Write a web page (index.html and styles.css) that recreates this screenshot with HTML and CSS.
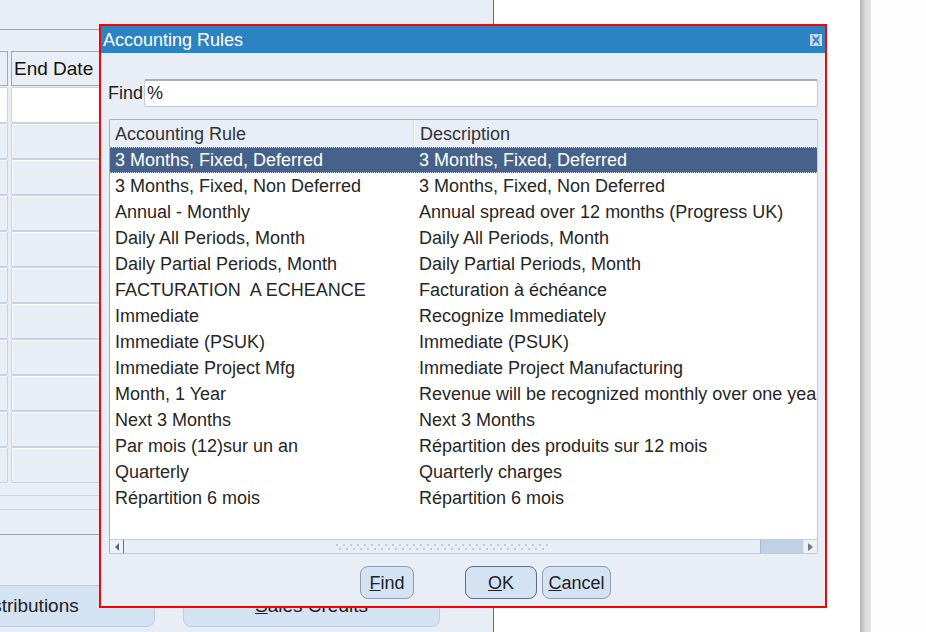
FILE: index.html
```html
<!DOCTYPE html>
<html>
<head>
<meta charset="utf-8">
<title>Accounting Rules</title>
<link rel="stylesheet" href="styles.css">
</head>
<body>
<div class="screen">
  <div class="form-panel">
    <div class="toolbar"></div>
    <div class="grid">
      <div class="grow head"><div class="cell c1"></div><div class="cell c2">End Date</div></div>
      <div class="grow"><div class="cell c1 white"></div><div class="cell c2 white"></div></div>
      <div class="grow"><div class="cell c1"></div><div class="cell c2"></div></div>
      <div class="grow"><div class="cell c1"></div><div class="cell c2"></div></div>
      <div class="grow"><div class="cell c1"></div><div class="cell c2"></div></div>
      <div class="grow"><div class="cell c1"></div><div class="cell c2"></div></div>
      <div class="grow"><div class="cell c1"></div><div class="cell c2"></div></div>
      <div class="grow"><div class="cell c1"></div><div class="cell c2"></div></div>
      <div class="grow"><div class="cell c1"></div><div class="cell c2"></div></div>
      <div class="grow"><div class="cell c1"></div><div class="cell c2"></div></div>
      <div class="grow"><div class="cell c1"></div><div class="cell c2"></div></div>
      <div class="grow"><div class="cell c1"></div><div class="cell c2"></div></div>
    </div>
    <div class="sep-lines"></div>
    <div class="sep-gray"></div>
    <div class="tabs">
      <div class="tab tab-dist">Distributions</div>
      <div class="tab tab-sales"><u>S</u>ales Credits</div>
    </div>
  </div>
  <div class="canvas"></div>
  <div class="vbar"></div>
  <div class="rest"></div>
</div>

<div class="dialog">
  <div class="titlebar">
    <span class="title">Accounting Rules</span>
    <span class="close">
      <svg width="12" height="12" viewBox="0 0 12 12">
        <rect width="12" height="12" fill="#c6dbf0"/>
        <path d="M3 3L9 9M9 3L3 9" stroke="#3482c6" stroke-width="2"/>
        <path d="M2 2h2M8 2h2M2 10h2M8 10h2" stroke="#3482c6" stroke-width="1"/>
      </svg>
    </span>
  </div>
  <div class="dlg-body">
    <div class="find-row">
      <span class="find-label">Find</span>
      <div class="find-input">%</div>
    </div>
    <div class="list">
      <div class="list-head">
        <div class="col-rule">Accounting Rule</div>
        <div class="col-desc">Description</div>
      </div>
      <div class="list-rows">
        <div class="lrow selected"><div class="col-rule">3 Months, Fixed, Deferred</div><div class="col-desc">3 Months, Fixed, Deferred</div></div>
        <div class="lrow"><div class="col-rule">3 Months, Fixed, Non Deferred</div><div class="col-desc">3 Months, Fixed, Non Deferred</div></div>
        <div class="lrow"><div class="col-rule">Annual - Monthly</div><div class="col-desc">Annual spread over 12 months (Progress UK)</div></div>
        <div class="lrow"><div class="col-rule">Daily All Periods, Month</div><div class="col-desc">Daily All Periods, Month</div></div>
        <div class="lrow"><div class="col-rule">Daily Partial Periods, Month</div><div class="col-desc">Daily Partial Periods, Month</div></div>
        <div class="lrow"><div class="col-rule">FACTURATION  A ECHEANCE</div><div class="col-desc">Facturation à échéance</div></div>
        <div class="lrow"><div class="col-rule">Immediate</div><div class="col-desc">Recognize Immediately</div></div>
        <div class="lrow"><div class="col-rule">Immediate (PSUK)</div><div class="col-desc">Immediate (PSUK)</div></div>
        <div class="lrow"><div class="col-rule">Immediate Project Mfg</div><div class="col-desc">Immediate Project Manufacturing</div></div>
        <div class="lrow"><div class="col-rule">Month, 1 Year</div><div class="col-desc">Revenue will be recognized monthly over one year</div></div>
        <div class="lrow"><div class="col-rule">Next 3 Months</div><div class="col-desc">Next 3 Months</div></div>
        <div class="lrow"><div class="col-rule">Par mois (12)sur un an</div><div class="col-desc">Répartition des produits sur 12 mois</div></div>
        <div class="lrow"><div class="col-rule">Quarterly</div><div class="col-desc">Quarterly charges</div></div>
        <div class="lrow"><div class="col-rule">Répartition 6 mois</div><div class="col-desc">Répartition 6 mois</div></div>
      </div>
      <div class="hscroll">
        <div class="sb-btn sb-left"><span class="tri-left"></span></div>
        <div class="sb-track"><div class="grip"></div></div>
        <div class="sb-thumb"></div>
        <div class="sb-btn sb-right"><span class="tri-right"></span></div>
      </div>
    </div>
    <div class="buttons">
      <div class="btn btn-find"><u>F</u>ind</div>
      <div class="btn btn-ok"><u>O</u>K</div>
      <div class="btn btn-cancel"><u>C</u>ancel</div>
    </div>
  </div>
</div>
</body>
</html>
```

FILE: styles.css
```css
* { box-sizing: border-box; }
html, body {
  margin: 0;
  padding: 0;
  width: 926px;
  height: 632px;
  overflow: hidden;
  font-family: "Liberation Sans", Arial, sans-serif;
  background: #ffffff;
}
.screen {
  display: flex;
  width: 926px;
  height: 632px;
}
.form-panel {
  width: 494px;
  flex: none;
  background: #e9edf5;
  border-right: 1px solid #5d6b80;
  overflow: hidden;
  display: flex;
  flex-direction: column;
}
.toolbar {
  height: 30px;
  flex: none;
  border-bottom: 1px solid #9ba4b0;
}
.grid {
  margin-top: 21px;
  margin-left: -12px;
  display: flex;
  flex-direction: column;
}
.grow {
  display: flex;
  gap: 3px;
  height: 36px;
}
.grow.head {
  height: 35px;
  margin-bottom: 1px;
}
.cell {
  height: 100%;
  border: 1px solid #c5d3e6;
  border-radius: 2px;
  box-shadow: inset 1px 1px 0 #ffffff;
  background: #e9edf5;
}
.c1 { width: 20px; }
.c2 { width: 300px; }
.head .cell {
  border: 1px solid #a6a6a6;
  box-shadow: none;
  background: #e9edf5;
  font-size: 19px;
  color: #111;
  line-height: 34px;
  padding-left: 2px;
  border-radius: 0;
}
.cell.white { background: #ffffff; }
.sep-lines {
  margin-top: 12px;
  height: 15px;
  border-top: 1px solid #c5d3e6;
  border-bottom: 1px solid #c5d3e6;
}
.sep-gray {
  margin-top: 24px;
  height: 1px;
  border-top: 1px solid #9ba4b0;
}
.tabs {
  margin-top: 50px;
  display: flex;
  gap: 28px;
  margin-left: -102px;
}
.tab {
  width: 257px;
  height: 42px;
  flex: none;
  background: #d4e3f3;
  border: 1px solid #bccde1;
  border-radius: 8px;
  font-size: 19px;
  color: #222;
  text-align: center;
  line-height: 40px;
}
.canvas {
  width: 366px;
  flex: none;
  background: #ffffff;
}
.vbar {
  width: 11px;
  flex: none;
  background: linear-gradient(90deg, #b3b3b3 0, #c8c8c8 3px, #dcdcdc 6px, #e2e2e2 100%);
}
.rest {
  flex: 1;
  background: #fdfdfd;
}

/* dialog */
.dialog {
  position: absolute;
  left: 99px;
  top: 24px;
  width: 728px;
  height: 584px;
  border: 2px solid #ff0000;
  background: #e9eef6;
  display: flex;
  flex-direction: column;
}
.titlebar {
  height: 27px;
  flex: none;
  background: #2c83c3;
  display: flex;
  align-items: center;
  justify-content: space-between;
  padding: 0 3px 0 2px;
}
.title {
  color: #ffffff;
  font-size: 18px;
  line-height: 27px;
  padding-top: 1px;
}
.close {
  display: flex;
  width: 12px;
  height: 12px;
  margin-top: 1px;
}
.dlg-body {
  flex: 1;
  padding: 26px 7px 0 7px;
  display: flex;
  flex-direction: column;
}
.find-row {
  display: flex;
  align-items: center;
  height: 28px;
}
.find-label {
  width: 36px;
  flex: none;
  font-size: 18px;
  color: #222;
  padding-top: 1px;
}
.find-input {
  flex: 1;
  height: 28px;
  background: #ffffff;
  border: 1px solid #bccbe0;
  border-top: 2px solid #a8b0ba;
  border-radius: 2px;
  font-size: 18px;
  color: #222;
  line-height: 25px;
  padding-left: 2px;
}
.list {
  margin-top: 12px;
  margin-left: 1px;
  height: 435px;
  border: 1px solid #bccbe0;
  border-top-color: #a9b1bb;
  border-left-color: #a9b1bb;
  border-radius: 2px;
  background: #ffffff;
  display: flex;
  flex-direction: column;
  overflow: hidden;
}
.list-head {
  height: 27px;
  flex: none;
  display: flex;
  background: #e9eef6;
  font-size: 18px;
  color: #333;
  line-height: 28px;
}
.col-rule {
  width: 303px;
  flex: none;
  padding-left: 5px;
  white-space: pre;
  overflow: hidden;
}
.col-desc {
  flex: 1;
  padding-left: 6px;
  white-space: nowrap;
  overflow: hidden;
}
.list-head .col-desc {
  border-left: 1px solid #cfdae8;
  box-shadow: inset 1px 0 0 #ffffff;
}
.list-rows {
  height: 392px;
  flex: none;
  font-size: 18px;
  color: #262626;
}
.lrow {
  display: flex;
  height: 26px;
  line-height: 27px;
}
.lrow.selected {
  background: #47628a;
  color: #ffffff;
  border-top: 1px dotted #c8d0dc;
  border-bottom: 1px dotted #c8d0dc;
  line-height: 25px;
}
.hscroll {
  height: 14px;
  flex: none;
  display: flex;
  background: #e9eef6;
  border-top: 1px solid #c3cfdf;
}
.sb-btn {
  width: 14px;
  flex: none;
  display: flex;
  align-items: center;
  justify-content: center;
}
.sb-left {
  border-right: 1px solid #6b7383;
  border-radius: 0 0 0 6px;
  background: #eef2f8;
}
.sb-right {
  border-left: 1px solid #dfe6ef;
  border-radius: 0 0 6px 0;
  background: #eef2f8;
}
.tri-left {
  width: 0;
  height: 0;
  border-top: 4px solid transparent;
  border-bottom: 4px solid transparent;
  border-right: 4px solid #5f6777;
}
.tri-right {
  width: 0;
  height: 0;
  border-top: 4px solid transparent;
  border-bottom: 4px solid transparent;
  border-left: 5px solid #6e7688;
}
.sb-track {
  flex: 1;
  display: flex;
  align-items: center;
  justify-content: center;
}
.grip {
  width: 212px;
  height: 8px;
  background-image:
    repeating-linear-gradient(90deg, #c3ccd8 0 2px, transparent 2px 7px),
    repeating-linear-gradient(90deg, transparent 0 3px, #c3ccd8 3px 5px, transparent 5px 7px);
  background-size: 100% 2px, 100% 2px;
  background-position: 0 1px, 0 5px;
  background-repeat: no-repeat;
}
.sb-thumb {
  width: 43px;
  flex: none;
  background: #c1d1e5;
  border-left: 1px solid #a7b7cc;
}
.buttons {
  margin-top: 12px;
  display: flex;
  padding-left: 252px;
  height: 33px;
}
.btn {
  height: 33px;
  flex: none;
  background: #d4e3f3;
  border: 1px solid #8d9cb1;
  border-radius: 8px;
  font-size: 18px;
  color: #222;
  text-align: center;
  line-height: 32px;
}
.btn-find { width: 54px; }
.btn-ok {
  width: 72px;
  margin-left: 51px;
  border-color: #5d6c84;
}
.btn-cancel {
  width: 69px;
  margin-left: 5px;
}
```
